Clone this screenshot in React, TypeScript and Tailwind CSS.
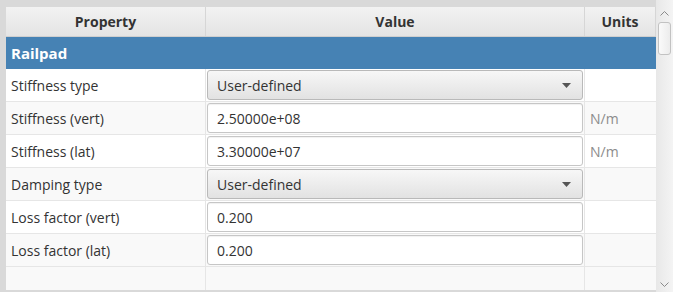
import type { ReactNode } from 'react';

type Row =
  | { kind: 'combo'; label: string; value: string }
  | { kind: 'text'; label: string; value: string; unit?: string };

const ROWS: Row[] = [
  { kind: 'combo', label: 'Stiffness type', value: 'User-defined' },
  { kind: 'text', label: 'Stiffness (vert)', value: '2.50000e+08', unit: 'N/m' },
  { kind: 'text', label: 'Stiffness (lat)', value: '3.30000e+07', unit: 'N/m' },
  { kind: 'combo', label: 'Damping type', value: 'User-defined' },
  { kind: 'text', label: 'Loss factor (vert)', value: '0.200' },
  { kind: 'text', label: 'Loss factor (lat)', value: '0.200' },
];

function HeaderCell({ children, className }: { children: ReactNode; className: string }) {
  return (
    <div
      className={`flex h-full items-center justify-center border-r border-[#d6d6d6] text-[14px] font-bold text-[#333] ${className}`}
    >
      {children}
    </div>
  );
}

function Combo({ value }: { value: string }) {
  return (
    <div className="flex h-[30px] w-full items-center justify-between rounded-[3px] border border-[#b9b9b9] bg-gradient-to-b from-[#f7f7f7] to-[#e2e2e2] pl-[9px] pr-[11px] text-[#333]">
      <span>{value}</span>
      <svg width="9" height="5" viewBox="0 0 9 5">
        <path d="M0 0 L9 0 L4.5 5 Z" fill="#555" />
      </svg>
    </div>
  );
}

function TextField({ value }: { value: string }) {
  return (
    <div className="flex h-[30px] w-full items-center rounded-[3px] border border-[#c6c6c6] bg-white pl-[9px] text-[#333] shadow-[inset_0_1px_1px_rgba(0,0,0,0.06)]">
      {value}
    </div>
  );
}

export default function App() {
  return (
    <div
      className="flex h-[292px] w-[673px] bg-[#d9d9d9] pb-[2px] pl-[6px] pt-[7px] text-[14px]"
      style={{ fontFamily: '"Open Sans", "Noto Sans", sans-serif' }}
    >
      <div className="flex w-[650px] flex-col bg-[#f9f9f9]">
        {/* header */}
        <div className="flex h-[30px] border-b border-[#cfcfcf] bg-gradient-to-b from-[#f2f2f2] to-[#e4e4e4]">
          <HeaderCell className="w-[200px]">Property</HeaderCell>
          <HeaderCell className="w-[379px]">Value</HeaderCell>
          <HeaderCell className="w-[71px]">Units</HeaderCell>
        </div>

        {/* group row */}
        <div className="flex h-[32px] items-center bg-[#4682b4] pl-[5px] text-[15px] font-bold text-white">
          Railpad
        </div>

        {ROWS.map((row, i) => (
          <div
            key={row.label}
            className={`flex h-[33px] border-b border-[#e6e6e6] ${i % 2 === 0 ? 'bg-white' : 'bg-[#f9f9f9]'}`}
          >
            <div className="flex w-[200px] items-center border-r border-[#e6e6e6] pl-[5px] text-[#333]">
              {row.label}
            </div>
            <div className="flex w-[379px] items-center border-r border-[#e6e6e6] px-[1px]">
              {row.kind === 'combo' ? <Combo value={row.value} /> : <TextField value={row.value} />}
            </div>
            <div className="flex w-[71px] items-center pl-[5px] text-[#8c8c8c]">
              {row.kind === 'text' ? row.unit : null}
            </div>
          </div>
        ))}

        <div className="flex flex-1 bg-[#f9f9f9]">
          <div className="w-[200px] border-r border-[#e6e6e6]" />
          <div className="w-[379px] border-r border-[#e6e6e6]" />
          <div className="flex-1" />
        </div>
      </div>

      {/* scrollbar */}
      <div className="-mt-[7px] -mb-[2px] flex w-[17px] flex-col items-center bg-gradient-to-r from-[#e8e8e8] to-[#f4f4f4] pt-[11px]">
        <svg width="9" height="5" viewBox="0 0 9 5" className="mb-[6px]">
          <path d="M0.5 4.5 L4.5 0.5 L8.5 4.5" fill="none" stroke="#8a8a8a" strokeWidth="1" />
        </svg>
        <div className="h-[33px] w-[13px] rounded-[3px] border border-[#c2c2c2] bg-gradient-to-r from-[#fafafa] to-[#ececec]" />
        <div className="flex-1" />
        <svg width="9" height="5" viewBox="0 0 9 5" className="mb-[5px]">
          <path d="M0.5 0.5 L4.5 4.5 L8.5 0.5" fill="none" stroke="#8a8a8a" strokeWidth="1" />
        </svg>
      </div>
    </div>
  );
}
